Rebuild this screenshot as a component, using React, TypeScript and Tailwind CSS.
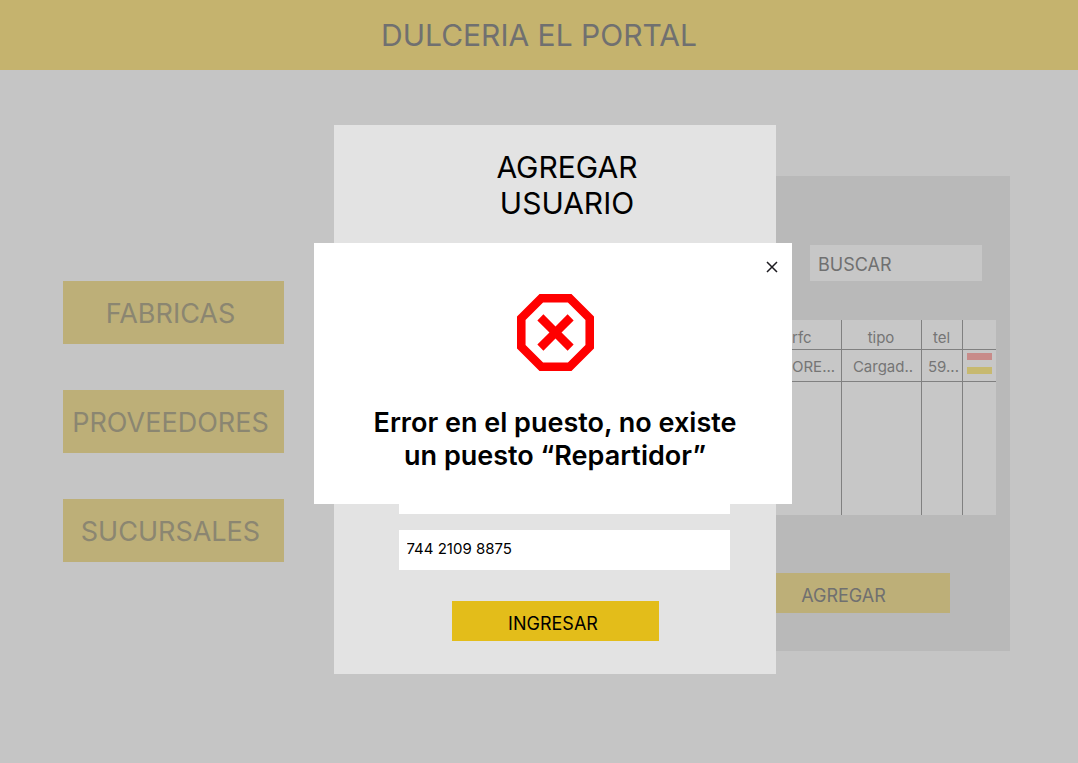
const sections = ["FABRICAS", "PROVEEDORES", "SUCURSALES"];

function Sidebar() {
  return (
    <nav className="mt-[105px] flex w-[221px] shrink-0 flex-col gap-[46px]">
      {sections.map((name) => (
        <button
          key={name}
          type="button"
          className="h-[63px] bg-[#bdaf78] pt-1 pr-1.5 text-[27px] text-[#8b8671]"
        >
          {name}
        </button>
      ))}
    </nav>
  );
}

function UsersTable() {
  return (
    <table className="h-[195px] w-full table-fixed border-collapse bg-[#c7c7c7] text-[15px] leading-5 text-[#757575]">
      <colgroup>
        <col />
        <col className="w-[57px]" />
        <col className="w-[80px]" />
        <col className="w-[41px]" />
        <col className="w-[34px]" />
      </colgroup>
      <thead>
        <tr className="h-[29px] border-b border-[#808080]">
          <th />
          <th className="border-r border-[#808080] pt-[7px] pl-2 text-left font-normal">rfc</th>
          <th className="border-r border-[#808080] pt-[7px] font-normal">tipo</th>
          <th className="border-r border-[#808080] pt-[7px] font-normal">tel</th>
          <th />
        </tr>
      </thead>
      <tbody>
        <tr className="h-[32px] border-b border-[#808080]">
          <td />
          <td className="border-r border-[#808080] pt-1 pl-2">ORE...</td>
          <td className="border-r border-[#808080] pt-1 pl-1 text-center">Cargad..</td>
          <td className="border-r border-[#808080] pt-1 pl-1 text-center">59...</td>
          <td className="pb-1">
            <div className="flex flex-col items-center gap-[7px]">
              <button type="button" aria-label="Eliminar" className="h-[7px] w-[25px] bg-[#c88b89]" />
              <button type="button" aria-label="Editar" className="h-[7px] w-[25px] bg-[#c7b970]" />
            </div>
          </td>
        </tr>
        <tr>
          <td />
          <td className="border-r border-[#808080]" />
          <td className="border-r border-[#808080]" />
          <td className="border-r border-[#808080]" />
          <td />
        </tr>
      </tbody>
    </table>
  );
}

function UsersPanel() {
  return (
    <section className="flex min-w-0 flex-1 flex-col items-end bg-[#b9b9b9] px-[14px] pt-[69px] pb-[38px]">
      <input
        type="search"
        aria-label="Buscar"
        placeholder="BUSCAR"
        className="mr-[14px] h-9 w-[172px] bg-[#c7c7c7] px-2 pt-0.5 text-lg text-[#707070] placeholder:text-[#707070]"
      />
      <div className="mt-[39px] w-full">
        <UsersTable />
      </div>
      <button
        type="button"
        className="mt-[58px] mr-[46px] h-10 w-[213px] bg-[#bdaf78] pt-1.5 text-lg text-[#707070]"
      >
        AGREGAR
      </button>
    </section>
  );
}

function AddUserDialog() {
  return (
    <div className="absolute inset-0 flex items-start justify-center pt-[125px] pl-8">
      <form
        role="dialog"
        aria-label="Agregar usuario"
        className="flex w-[442px] flex-col items-center bg-[#e3e3e3] pt-6 pb-[33px]"
      >
        <h2 className="ml-6 w-[160px] text-center text-[30px] leading-9">AGREGAR USUARIO</h2>
        <div className="mt-[253px] ml-[18px] flex w-[331px] flex-col gap-4">
          <input aria-label="Puesto" className="h-10 bg-white px-2 text-[15px]" />
          <input
            aria-label="Teléfono"
            defaultValue="744 2109 8875"
            className="h-10 bg-white px-2 pb-1 text-[15px] text-black"
          />
        </div>
        <button
          type="button"
          className="mt-[31px] h-10 w-[207px] bg-[#e3bd1a] pt-1.5 pr-1 text-lg text-black"
        >
          INGRESAR
        </button>
      </form>
    </div>
  );
}

function ErrorDialog() {
  return (
    <div className="absolute inset-0 flex items-start justify-center pt-[243px] pl-7">
      <div
        role="alertdialog"
        aria-labelledby="error-message"
        className="flex w-[478px] flex-col items-center bg-white pt-[18px] pr-[14px] pb-8 pl-[18px]"
      >
        <button type="button" aria-label="Cerrar" className="self-end">
          <svg viewBox="0 0 12 12" className="size-3" fill="none" stroke="#1d1b20" strokeWidth="1.5">
            <path d="M1 1l10 10M11 1L1 11" />
          </svg>
        </button>
        <svg viewBox="3 3 18 18" className="mt-[21px] size-[77px]" fill="#ff0000" aria-hidden="true">
          <path d="M15.73 3H8.27L3 8.27v7.46L8.27 21h7.46L21 15.73V8.27L15.73 3zM19 14.9L14.9 19H9.1L5 14.9V9.1L9.1 5h5.8L19 9.1v5.8zm-4.17-7.14L12 10.59 9.17 7.76 7.76 9.17 10.59 12l-2.83 2.83 1.41 1.41L12 13.41l2.83 2.83 1.41-1.41L13.41 12l2.83-2.83-1.41-1.41z" />
        </svg>
        <p
          id="error-message"
          className="mt-[35px] text-center text-[27px] leading-[33px] font-semibold text-black"
        >
          Error en el puesto, no existe
          <br />
          un puesto “Repartidor”
        </p>
      </div>
    </div>
  );
}

export default function App() {
  return (
    <div className="relative min-h-screen bg-[#c5c5c5] font-['Inter',sans-serif]">
      <header className="flex h-[70px] items-center justify-center bg-[#c5b36e]">
        <h1 className="text-[30px] text-[#707070]">DULCERIA EL PORTAL</h1>
      </header>
      <main className="flex items-start gap-16 pt-[106px] pr-[68px] pb-28 pl-[63px]">
        <Sidebar />
        <UsersPanel />
      </main>
      <AddUserDialog />
      <ErrorDialog />
    </div>
  );
}
